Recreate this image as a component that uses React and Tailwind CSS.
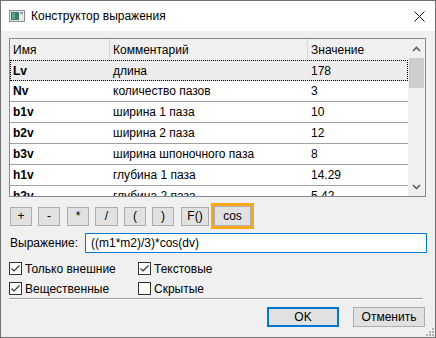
import React from 'react';

const rows = [
  { name: 'Lv', comment: 'длина', value: '178', selected: true },
  { name: 'Nv', comment: 'количество пазов', value: '3' },
  { name: 'b1v', comment: 'ширина 1 паза', value: '10' },
  { name: 'b2v', comment: 'ширина 2 паза', value: '12' },
  { name: 'b3v', comment: 'ширина шпоночного паза', value: '8' },
  { name: 'h1v', comment: 'глубина 1 паза', value: '14.29' },
  { name: 'h2v', comment: 'глубина 2 паза', value: '5.42' },
];

const ops = [
  { label: '+', ml: 'ml-[9px]', w: 'w-[22px]' },
  { label: '-', ml: 'ml-[6px]', w: 'w-[22px]' },
  { label: '*', ml: 'ml-[7px]', w: 'w-[22px]' },
  { label: '/', ml: 'ml-[6px]', w: 'w-[23px]' },
  { label: '(', ml: 'ml-[6px]', w: 'w-[22px]' },
  { label: ')', ml: 'ml-[6px]', w: 'w-[22px]' },
  { label: 'F()', ml: 'ml-[7px]', w: 'w-[28px]' },
];

const Check = ({ checked }) => (
  <svg width="13" height="13" viewBox="0 0 13 13" className="shrink-0">
    <rect x="0.5" y="0.5" width="12" height="12" fill="#fff" stroke="#333" />
    {checked && <path d="M2.5 6.5 L5 9 L10.5 3.5" fill="none" stroke="#333" strokeWidth="1.2" />}
  </svg>
);

const Chevron = ({ up }) => (
  <svg width="9" height="6" viewBox="0 0 9 6">
    <path d={up ? 'M1 5 L4.5 1.5 L8 5' : 'M1 1 L4.5 4.5 L8 1'} fill="none" stroke="#606060" strokeWidth="1.6" />
  </svg>
);

export default function App() {
  return (
    <div
      className="w-[436px] h-[338px] border border-[#707070] flex flex-col bg-[#f0f0f0] text-[12px] text-black overflow-hidden"
      style={{ fontFamily: '"Liberation Sans", Arial, sans-serif' }}
    >
      {/* title bar */}
      <div className="h-[30px] bg-white flex items-center shrink-0">
        <svg width="16" height="12" viewBox="0 0 16 12" className="ml-[8px]">
          <rect x="0.5" y="0.5" width="15" height="11" fill="#e8e8e8" stroke="#8a8a8a" />
          <rect x="2" y="2" width="8" height="8" fill="#3d7a6a" />
          <rect x="3" y="3" width="3" height="6" fill="#5fa08c" />
          <rect x="11" y="2" width="3" height="2" fill="#7aa0c0" />
        </svg>
        <span className="ml-[6px] text-[12px] leading-none">Конструктор выражения</span>
        <svg width="11" height="11" viewBox="0 0 11 11" className="ml-auto mr-[10px]">
          <path d="M0.5 0.5 L10.5 10.5 M10.5 0.5 L0.5 10.5" stroke="#111" strokeWidth="1" />
        </svg>
      </div>

      <div className="flex-1 flex flex-col pt-[7px] relative">
        {/* table */}
        <div className="ml-[8px] w-[417px] h-[159px] border border-[#828790] bg-white flex overflow-hidden">
          <div className="flex-1 flex flex-col overflow-hidden">
            <div className="h-[21px] shrink-0 flex bg-[#f0f0f0]">
              <div className="w-[100px] px-[3px] flex items-center border-r border-[#d8d8d8]">Имя</div>
              <div className="w-[198px] px-[3px] flex items-center border-r border-[#d8d8d8]">Комментарий</div>
              <div className="flex-1 px-[3px] flex items-center">Значение</div>
            </div>
            {rows.map((r) => (
              <div
                key={r.name}
                className={
                  r.selected
                    ? 'h-[21px] shrink-0 flex bg-[#ececec] border border-dotted border-black'
                    : 'h-[21px] shrink-0 flex border-b border-[#a0a0a0]'
                }
              >
                <div className={r.selected ? 'w-[99px] px-[2px] flex items-center font-bold' : 'w-[100px] px-[3px] flex items-center font-bold'}>
                  {r.name}
                </div>
                <div className="w-[198px] px-[3px] flex items-center whitespace-nowrap">{r.comment}</div>
                <div className="flex-1 px-[3px] flex items-center">{r.value}</div>
              </div>
            ))}
          </div>
          <div className="w-[17px] shrink-0 bg-[#f0f0f0] flex flex-col items-center">
            <div className="h-[19px] flex items-center justify-center"><Chevron up /></div>
            <div className="w-[15px] h-[30px] bg-[#cdcdcd]" />
            <div className="flex-1" />
            <div className="h-[19px] flex items-center justify-center"><Chevron /></div>
          </div>
        </div>

        {/* operator buttons */}
        <div className="mt-[6px] h-[26px] flex items-center">
          {ops.map((o) => (
            <button
              key={o.label}
              className={`${o.ml} ${o.w} h-[19px] bg-[#e1e1e1] border border-[#adadad] flex items-center justify-center text-[12px] leading-none`}
            >
              {o.label}
            </button>
          ))}
          <div className="ml-[2px] w-[43px] h-[26px] border-[3px] border-[#f5a81c] flex">
            <button className="flex-1 bg-[#e1e1e1] border border-[#adadad] flex items-center justify-center text-[12px] leading-none">
              cos
            </button>
          </div>
        </div>

        {/* expression */}
        <div className="mt-[4px] h-[20px] flex items-center">
          <span className="ml-[9px] w-[75px]">Выражение:</span>
          <div className="w-[342px] h-[20px] bg-white border border-[#0078d7] flex items-center px-[5px]">
            ((m1*m2)/3)*cos(dv)
          </div>
        </div>

        {/* checkboxes */}
        <div className="mt-[9px] h-[13px] flex items-center">
          <div className="ml-[8px] w-[129px] flex items-center gap-[3px]"><Check checked /><span>Только внешние</span></div>
          <div className="flex items-center gap-[3px]"><Check checked /><span>Текстовые</span></div>
        </div>
        <div className="mt-[7px] h-[13px] flex items-center">
          <div className="ml-[8px] w-[129px] flex items-center gap-[3px]"><Check checked /><span>Вещественные</span></div>
          <div className="flex items-center gap-[3px]"><Check /><span>Скрытые</span></div>
        </div>

        {/* separator */}
        <div className="mt-[3px] ml-[8px] w-[414px] border-t border-[#a0a0a0] border-b border-b-white" />

        {/* dialog buttons */}
        <div className="mt-[7px] flex justify-end pr-[10px] gap-[14px]">
          <button className="w-[72px] h-[20px] bg-[#e1e1e1] border-2 border-[#0078d7] flex items-center justify-center text-[12px] leading-none">
            OK
          </button>
          <button className="w-[72px] h-[20px] bg-[#e1e1e1] border border-[#adadad] flex items-center justify-center text-[12px] leading-none">
            Отменить
          </button>
        </div>

        {/* resize grip */}
        <svg width="8" height="8" viewBox="0 0 8 8" className="absolute right-[1px] bottom-[1px]">
          <rect x="6" y="0" width="2" height="2" fill="#b0b0b0" />
          <rect x="3" y="3" width="2" height="2" fill="#b0b0b0" />
          <rect x="6" y="3" width="2" height="2" fill="#b0b0b0" />
          <rect x="0" y="6" width="2" height="2" fill="#b0b0b0" />
          <rect x="3" y="6" width="2" height="2" fill="#b0b0b0" />
          <rect x="6" y="6" width="2" height="2" fill="#b0b0b0" />
        </svg>
      </div>
    </div>
  );
}
